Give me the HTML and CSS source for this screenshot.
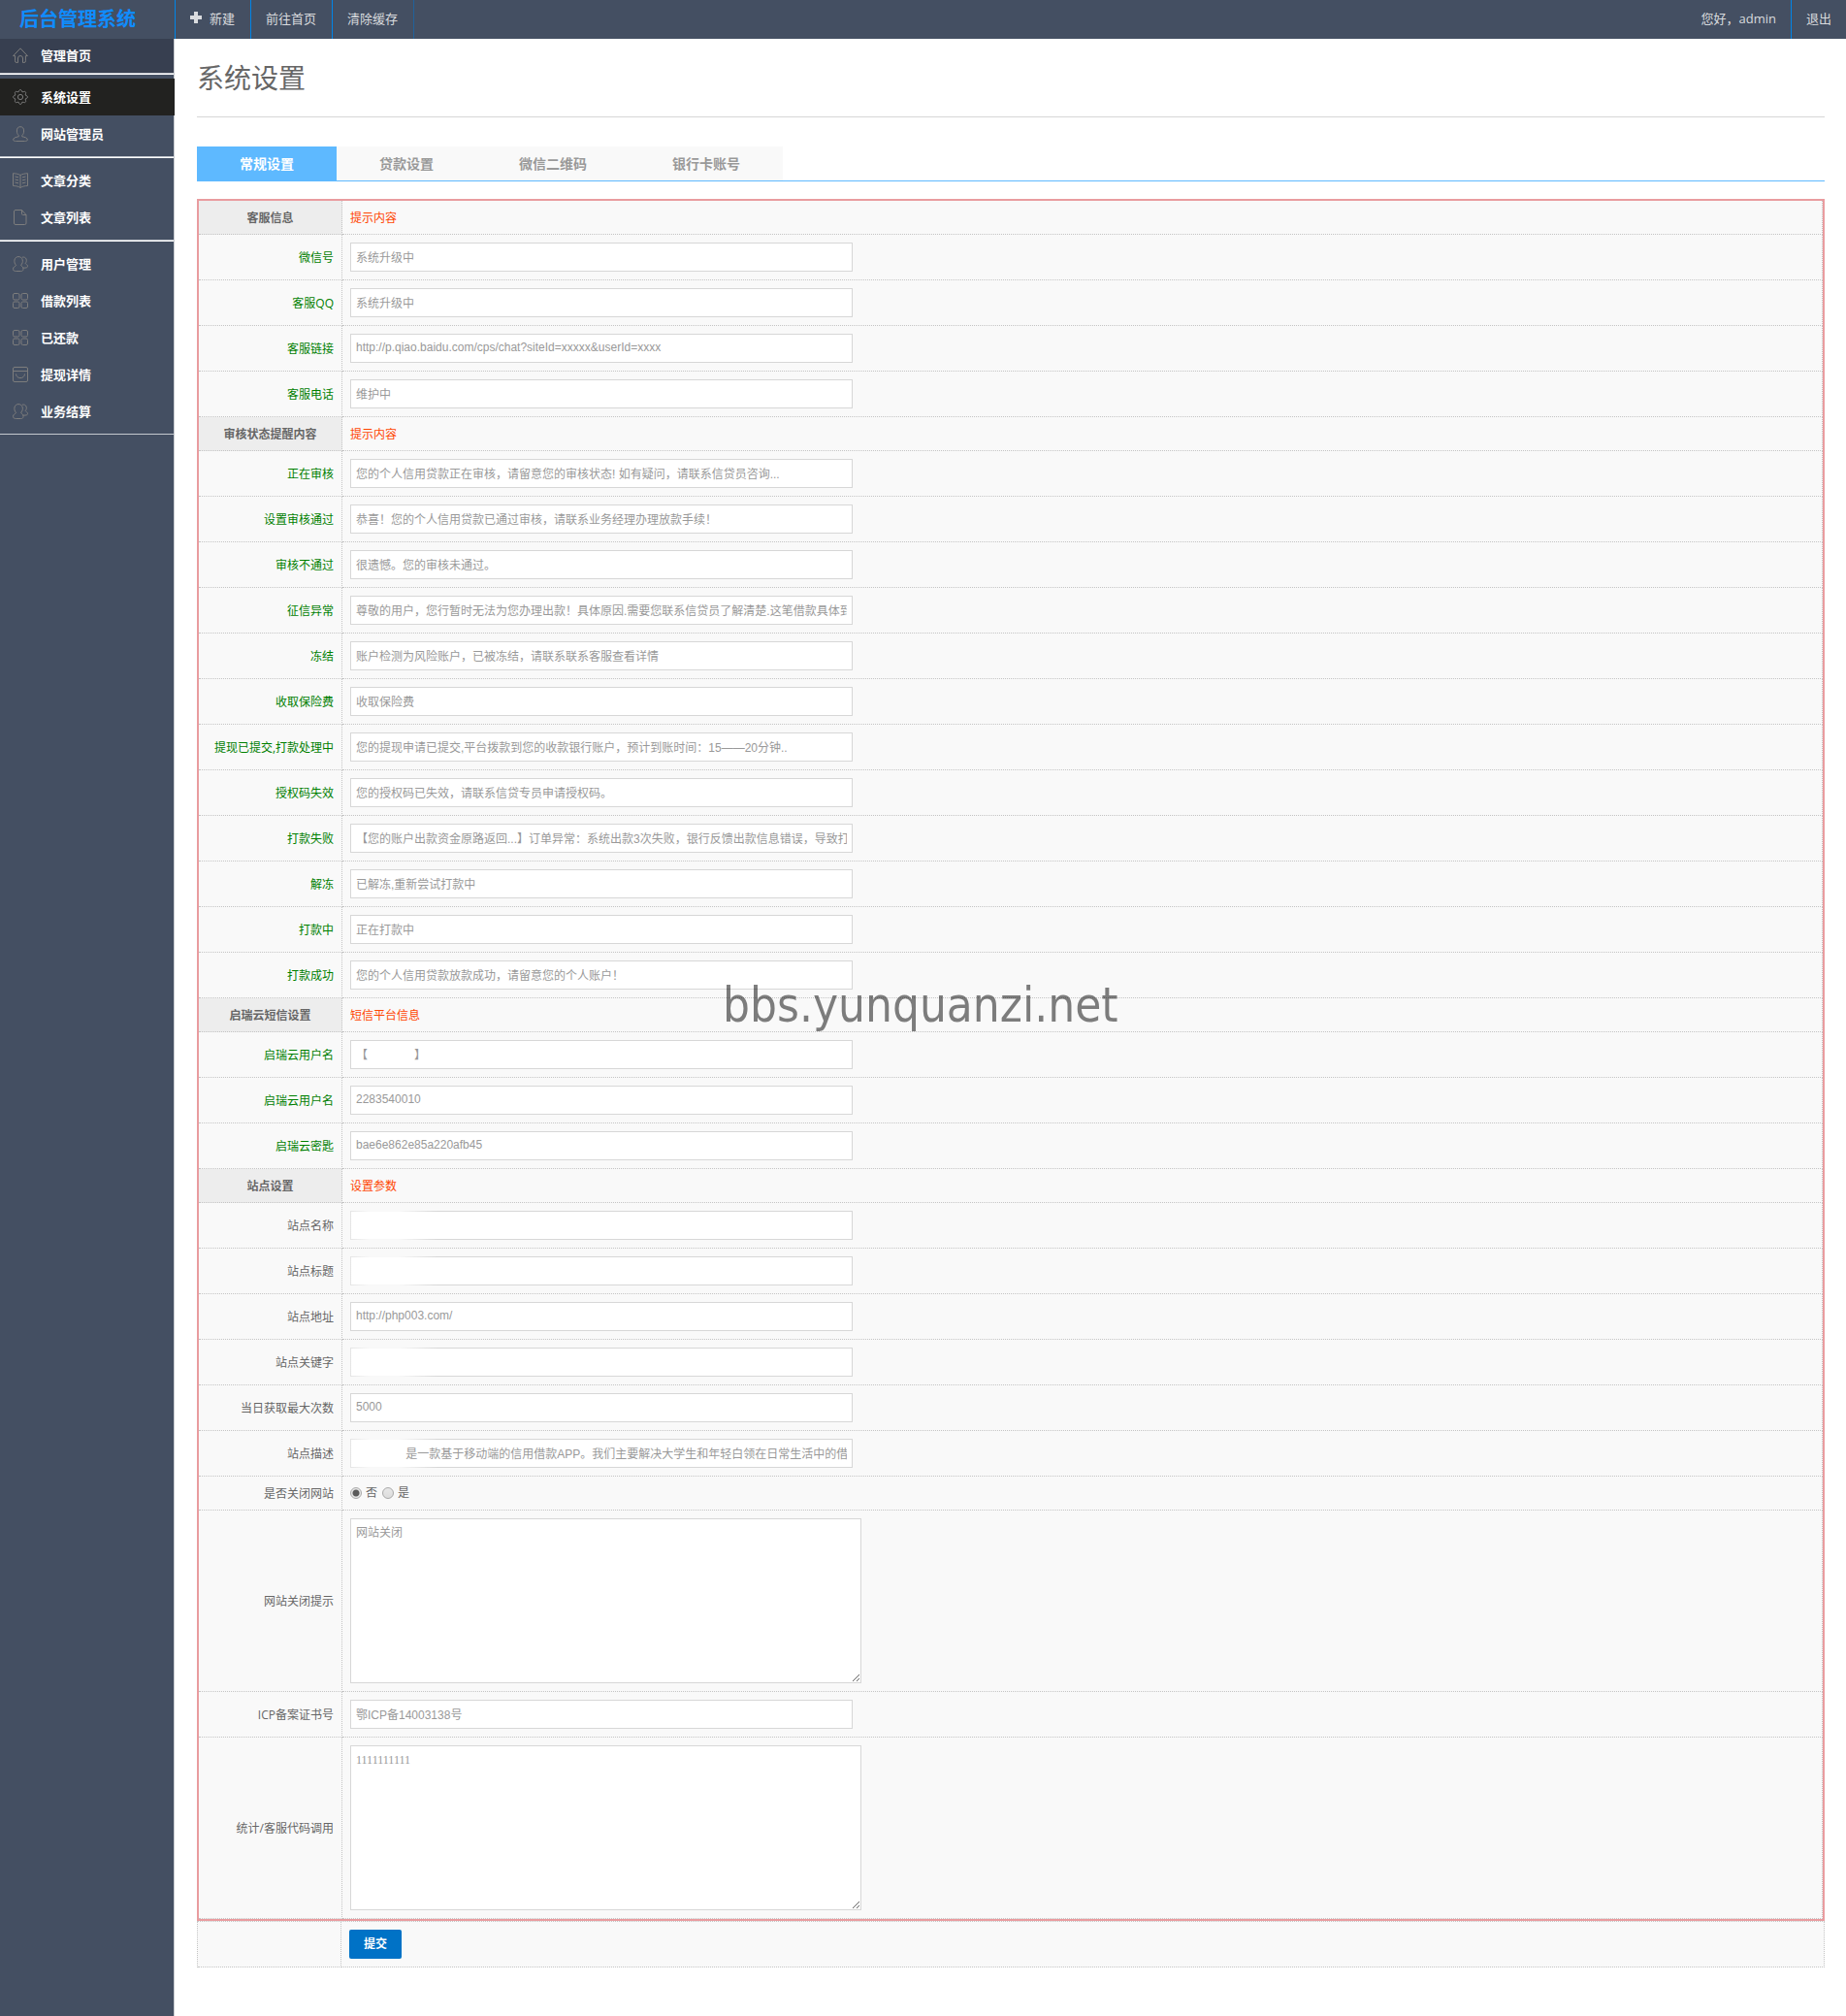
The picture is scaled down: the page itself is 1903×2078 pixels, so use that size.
FILE: index.html
```html
<!DOCTYPE html>
<html lang="zh-CN">
<head>
    <meta charset="UTF-8">
    <meta name="viewport" content="width=device-width, initial-scale=1.0">
    <title>系统设置 - 后台管理系统</title>
    <link rel="stylesheet" href="styles.css">
</head>
<body>

<svg class="sprite" aria-hidden="true">
    <symbol id="i-home" viewBox="0 0 16 16"><path d="M.6 8.6 8 .8l7.4 7.8h-2v5.2a1.6 1.6 0 0 1-1.6 1.7h-1.3V11a2.5 2.5 0 0 0-5 0v4.500H4.200a1.600 1.600 0 0 1-1.600-1.700V8.600z"/></symbol>
    <symbol id="i-gear" viewBox="0 0 16 16"><path d="M6.500 2.300C6.500 0 9.500 0 9.500 2.300l1.500.6c1.600-1.600 3.700.5 2.100 2.100l.6 1.500c2.300 0 2.300 3 0 3l-.6 1.500c1.600 1.600-.5 3.700-2.100 2.100l-1.500.6c0 2.300-3 2.300-3 0L5 13.100c-1.600 1.600-3.700-.5-2.100-2.100l-.6-1.500c-2.300 0-2.300-3 0-3L2.900 5C1.300 3.400 3.400 1.300 5 2.900z"/><circle cx="8" cy="8" r="2.600"/></symbol>
    <symbol id="i-user" viewBox="0 0 16 16"><path d="M6.200 9.500C4.900 8.400 4.400 6.800 4.400 5a3.600 4.300 0 0 1 7.200 0c0 1.800-.5 3.400-1.800 4.500v1.300c2.500.5 5.600 1.200 5.600 3.200 0 1-1.400 1.500-3 1.500H3.600c-1.600 0-3-.5-3-1.500 0-2 3.100-2.700 5.600-3.200z"/></symbol>
    <symbol id="i-book" viewBox="0 0 16 16"><path d="M8 2.500C6 1.200 3 .9.500.7v12.800c2.500.1 5.500.5 7.500 2 2-1.500 5-1.900 7.500-2V.7C13 .9 10 1.200 8 2.500zm0 0v13M2.500 4l3.500.8M2.500 7l3.500.8M2.500 10l3.500.8M13.500 4l-3.500.8M13.500 7l-3.500.8M13.500 10l-3.500.8"/></symbol>
    <symbol id="i-file" viewBox="0 0 16 16"><path d="M3 .5h6.500l4.500 5v8.500a1.500 1.500 0 0 1-1.500 1.500H3A1.500 1.500 0 0 1 1.500 14V2A1.500 1.500 0 0 1 3 .5zm6.500 0v4a1 1 0 0 0 1 1H14"/></symbol>
    <symbol id="i-group" viewBox="0 0 16 16"><path d="M3.600 9.300C.8 7 1.200.6 6 .6s5.600 6 2.600 8.600c.4 1.400 2.600 1.400 2.400 4.300-.1 1.500-.9 2-2.500 2h-5c-2 0-3-.8-3-2.200 0-2.400 2.500-2.600 3.100-4zM9.800 1.200c4.800-1.200 5.500 4.200 3.400 6.200.3 1 2.300 1.200 2.300 3 0 1.500-1.500 1.800-4.500 1.700"/></symbol>
    <symbol id="i-grid" viewBox="0 0 16 16"><rect x=".5" y=".5" width="6.500" height="6.500" rx="1.500"/><rect x="9" y=".5" width="6.500" height="6.500" rx="1.500"/><rect x=".5" y="9" width="6.500" height="6.500" rx="1.500"/><rect x="9" y="9" width="6.500" height="6.500" rx="1.500"/></symbol>
    <symbol id="i-bag" viewBox="0 0 16 16"><path d="M2 .5h12A1.500 1.500 0 0 1 15.500 2v12a1.500 1.500 0 0 1-1.500 1.500H2A1.500 1.500 0 0 1 .5 14V2A1.500 1.500 0 0 1 2 .5zM.5 4.500h15M3.500 7.500c.3 5.500 8.700 5.500 9 0"/></symbol>
</svg>

<header class="topbar">
    <a class="brand" href="#">后台管理系统</a>
    <nav class="topbar-menu">
        <a href="#"><svg class="plus" viewBox="0 0 12 12" aria-hidden="true"><path d="M4 0h4v4h4v4H8v4H4V8H0V4h4z"/></svg>新建</a>
        <a href="#">前往首页</a>
        <a href="#">清除缓存</a>
    </nav>
    <div class="topbar-user">
        <a href="#">您好，admin</a>
        <a href="#">退出</a>
    </div>
</header>

<div class="layout">
    <aside class="sidebar">
        <ul class="menu menu-home">
            <li><a href="#"><svg><use href="#i-home"/></svg>管理首页</a></li>
        </ul>
        <ul class="menu">
            <li><a class="cur" href="#"><svg><use href="#i-gear"/></svg>系统设置</a></li>
            <li><a href="#"><svg><use href="#i-user"/></svg>网站管理员</a></li>
        </ul>
        <ul class="menu">
            <li><a href="#"><svg><use href="#i-book"/></svg>文章分类</a></li>
            <li><a href="#"><svg><use href="#i-file"/></svg>文章列表</a></li>
        </ul>
        <ul class="menu">
            <li><a href="#"><svg><use href="#i-group"/></svg>用户管理</a></li>
            <li><a href="#"><svg><use href="#i-grid"/></svg>借款列表</a></li>
            <li><a href="#"><svg><use href="#i-grid"/></svg>已还款</a></li>
            <li><a href="#"><svg><use href="#i-bag"/></svg>提现详情</a></li>
            <li><a href="#"><svg><use href="#i-group"/></svg>业务结算</a></li>
        </ul>
    </aside>

    <main class="main">
        <h1>系统设置</h1>
        <nav class="tabs">
            <a class="selected" href="#">常规设置</a>
            <a href="#">贷款设置</a>
            <a href="#">微信二维码</a>
            <a href="#">银行卡账号</a>
        </nav>

        <form>
            <div class="marked">
                <table class="form-table">
                    <tr class="section"><th>客服信息</th><td>提示内容</td></tr>
                    <tr class="key"><th><label for="weixin">微信号</label></th><td><input type="text" id="weixin" value="系统升级中"></td></tr>
                    <tr class="key"><th><label for="qq">客服QQ</label></th><td><input type="text" id="qq" value="系统升级中"></td></tr>
                    <tr class="key"><th><label for="kflink">客服链接</label></th><td><input type="text" id="kflink" value="http://p.qiao.baidu.com/cps/chat?siteId=xxxxx&amp;userId=xxxx"></td></tr>
                    <tr class="key"><th><label for="kftel">客服电话</label></th><td><input type="text" id="kftel" value="维护中"></td></tr>

                    <tr class="section"><th>审核状态提醒内容</th><td>提示内容</td></tr>
                    <tr class="key"><th><label for="s1">正在审核</label></th><td><input type="text" id="s1" value="您的个人信用贷款正在审核，请留意您的审核状态! 如有疑问，请联系信贷员咨询..."></td></tr>
                    <tr class="key"><th><label for="s2">设置审核通过</label></th><td><input type="text" id="s2" value="恭喜！您的个人信用贷款已通过审核，请联系业务经理办理放款手续！"></td></tr>
                    <tr class="key"><th><label for="s3">审核不通过</label></th><td><input type="text" id="s3" value="很遗憾。您的审核未通过。"></td></tr>
                    <tr class="key"><th><label for="s4">征信异常</label></th><td><input type="text" id="s4" value="尊敬的用户，您行暂时无法为您办理出款！具体原因.需要您联系信贷员了解清楚.这笔借款具体到"></td></tr>
                    <tr class="key"><th><label for="s5">冻结</label></th><td><input type="text" id="s5" value="账户检测为风险账户，已被冻结，请联系联系客服查看详情"></td></tr>
                    <tr class="key"><th><label for="s6">收取保险费</label></th><td><input type="text" id="s6" value="收取保险费"></td></tr>
                    <tr class="key"><th><label for="s7">提现已提交,打款处理中</label></th><td><input type="text" id="s7" value="您的提现申请已提交,平台拨款到您的收款银行账户，预计到账时间：15——20分钟.."></td></tr>
                    <tr class="key"><th><label for="s8">授权码失效</label></th><td><input type="text" id="s8" value="您的授权码已失效，请联系信贷专员申请授权码。"></td></tr>
                    <tr class="key"><th><label for="s9">打款失败</label></th><td><input type="text" id="s9" value="【您的账户出款资金原路返回...】订单异常：系统出款3次失败，银行反馈出款信息错误，导致打"></td></tr>
                    <tr class="key"><th><label for="s10">解冻</label></th><td><input type="text" id="s10" value="已解冻,重新尝试打款中"></td></tr>
                    <tr class="key"><th><label for="s11">打款中</label></th><td><input type="text" id="s11" value="正在打款中"></td></tr>
                    <tr class="key"><th><label for="s12">打款成功</label></th><td><input type="text" id="s12" value="您的个人信用贷款放款成功，请留意您的个人账户！"></td></tr>

                    <tr class="section"><th>启瑞云短信设置</th><td>短信平台信息</td></tr>
                    <tr class="key"><th><label for="sms1">启瑞云用户名</label></th><td><input type="text" id="sms1" value="【　　　　】"></td></tr>
                    <tr class="key"><th><label for="sms2">启瑞云用户名</label></th><td><input type="text" id="sms2" value="2283540010"></td></tr>
                    <tr class="key"><th><label for="sms3">启瑞云密匙</label></th><td><input type="text" id="sms3" value="bae6e862e85a220afb45"></td></tr>

                    <tr class="section"><th>站点设置</th><td>设置参数</td></tr>
                    <tr><th><label for="sitename">站点名称</label></th><td class="faded"><input type="text" id="sitename" value=""></td></tr>
                    <tr><th><label for="sitetitle">站点标题</label></th><td class="faded"><input type="text" id="sitetitle" value=""></td></tr>
                    <tr><th><label for="siteurl">站点地址</label></th><td><input type="text" id="siteurl" value="http://php003.com/"></td></tr>
                    <tr><th><label for="sitekey">站点关键字</label></th><td class="faded"><input type="text" id="sitekey" value=""></td></tr>
                    <tr><th><label for="maxnum">当日获取最大次数</label></th><td><input type="text" id="maxnum" value="5000"></td></tr>
                    <tr><th><label for="sitedesc">站点描述</label></th><td class="faded"><input type="text" id="sitedesc" value="　　　　 是一款基于移动端的信用借款APP。我们主要解决大学生和年轻白领在日常生活中的借"></td></tr>
                    <tr>
                        <th>是否关闭网站</th>
                        <td>
                            <div class="radios">
                                <label><input type="radio" name="closed" checked>否</label>
                                <label><input type="radio" name="closed">是</label>
                            </div>
                        </td>
                    </tr>
                    <tr><th><label for="closetip">网站关闭提示</label></th><td><textarea id="closetip">网站关闭</textarea></td></tr>
                    <tr><th><label for="icp">ICP备案证书号</label></th><td><input type="text" id="icp" value="鄂ICP备14003138号"></td></tr>
                    <tr><th><label for="code">统计/客服代码调用</label></th><td><textarea id="code">1111111111</textarea></td></tr>
                </table>
                <div class="watermark">bbs.yunquanzi.net</div>
            </div>

            <table class="form-table submit-table">
                <tr><th></th><td><button type="submit" class="btn">提交</button></td></tr>
            </table>
        </form>
    </main>
</div>

</body>
</html>
```
FILE: styles.css
```css
* {
    box-sizing: border-box;
}
body {
    margin: 0;
    min-height: 100vh;
    display: flex;
    flex-direction: column;
    background: #fff;
    color: #666;
    font: 12px/18px "Open Sans", "Noto Sans CJK SC", sans-serif;
}
a {
    color: inherit;
    text-decoration: none;
}
.sprite {
    display: none;
}

/* top bar */
.topbar {
    display: flex;
    height: 40px;
    background: #444f62;
    color: #d9dbde;
    font-size: 13px;
    line-height: 39px;
}
.brand {
    width: 180px;
    padding-left: 20px;
    color: #108cff;
    font-size: 20px;
    font-weight: bold;
    line-height: 40px;
}
.topbar-menu,
.topbar-user {
    display: flex;
}
.topbar-menu {
    border-left: 1px solid #0085e8;
}
.topbar-menu a {
    padding: 0 16px 0 15px;
    border-right: 1px solid #0085e8;
}
.topbar-menu a:last-child {
    border-color: #21629b;
}
.topbar-user {
    margin-left: auto;
}
.topbar-user a {
    padding: 0 15px;
}
.topbar-user a + a {
    border-left: 1px solid #0085e8;
}
.plus {
    width: 12px;
    height: 12px;
    margin-right: 8px;
    fill: #d9dbde;
}

/* side menu */
.layout {
    flex: 1;
    display: flex;
}
.sidebar {
    width: 180px;
    flex: none;
    background: #444f62;
    border-right: 1px solid #c8cbd0;
}
.menu {
    list-style: none;
    margin: 0;
    padding: 4px 0;
    border-top: 1px solid #fff;
    border-bottom: 1px solid #c4c8ce;
}
.menu a {
    display: flex;
    align-items: center;
    gap: 13px;
    height: 38px;
    padding-left: 13px;
    color: #fff;
    font-size: 13px;
    font-weight: bold;
    line-height: 37px;
}
.menu svg {
    width: 16px;
    height: 16px;
    fill: none;
    stroke: #7d7d7d;
}
.menu .cur {
    margin-right: -1px;
    background: #222220;
}
.menu-home {
    padding: 0;
    border-top: 0;
    background: #373f50;
}
.menu-home a {
    height: 35px;
    padding-bottom: 1px;
}

/* content */
.main {
    flex: 1;
    padding: 20px 22px 50px 23px;
}
h1 {
    margin: 0 0 30px;
    padding-bottom: 20px;
    border-bottom: 1px solid #d7d7d7;
    font-size: 28px;
    font-weight: normal;
    line-height: 40px;
}
.tabs {
    display: flex;
    margin-bottom: 18px;
    border-bottom: 1px solid #5eb9ff;
}
.tabs a {
    padding: 0 44px;
    background: #f9f9f9;
    color: #999;
    font-size: 14px;
    font-weight: bold;
    line-height: 35px;
}
.tabs .selected {
    margin-bottom: -1px;
    padding-bottom: 1px;
    background: #5eb9ff;
    color: #fff;
}

/* settings form */
.marked {
    position: relative;
    border: 2px solid #e99c9f;
}
.form-table {
    width: 100%;
    table-layout: fixed;
    border-spacing: 0;
    background: #f9f9f9;
}
.form-table th,
.form-table td {
    padding: 8px;
    border-right: 1px dotted #c4c4c4;
    border-bottom: 1px dotted #c4c4c4;
}
.form-table th,
.form-table .section td {
    padding: 9px 8px 7px;
}
.form-table th {
    width: 148px;
    font-weight: normal;
    text-align: right;
    white-space: nowrap;
}
.form-table td {
    text-align: left;
}
.form-table .section th {
    background: #ededed;
    font-weight: bold;
    text-align: center;
}
.form-table .section td {
    color: #ff4500;
}
.form-table .key th {
    color: #008000;
}
input[type="text"],
textarea {
    display: block;
    width: 518px;
    height: 30px;
    margin: 0;
    padding: 4px 5px 6px;
    border: 1px solid #d7d7d7;
    border-radius: 0;
    outline: none;
    background: #fff;
    color: #999;
    font: 12px/18px "Liberation Sans", "Noto Sans CJK SC", sans-serif;
}
textarea {
    width: 527px;
    height: 170px;
    padding: 5px;
    font-family: "Liberation Serif", "Noto Sans CJK SC", serif;
}
.faded input {
    border-image: linear-gradient(to right, #e4e4e4, #f8f8f8 20px, #f8f8f8 50px, #d7d7d7 90px) 1;
}
.radios {
    display: flex;
    gap: 5px;
}
.radios label {
    display: flex;
    align-items: center;
    gap: 4px;
}
.radios input {
    appearance: none;
    width: 12px;
    height: 12px;
    margin: 0;
    border: 1px solid #a9a9a9;
    border-radius: 50%;
    background: linear-gradient(#e8e8e8, #dcdcdc);
}
.radios input:checked {
    background: radial-gradient(circle, #5a5a5a 3px, #e6e6e6 4px);
}
.submit-table {
    border-top: 1px dotted #c4c4c4;
    border-left: 1px dotted #c4c4c4;
}
.btn {
    display: block;
    height: 30px;
    padding: 0 15px;
    border: 0;
    border-radius: 2px;
    background: #0072c6;
    color: #fff;
    font: bold 12px/30px "Open Sans", "Noto Sans CJK SC", sans-serif;
    cursor: pointer;
}
.watermark {
    position: absolute;
    top: 795px;
    left: 540px;
    color: rgba(0, 0, 0, 0.5);
    font: 49px/70px "DejaVu Sans Condensed", "DejaVu Sans", sans-serif;
    pointer-events: none;
}
```
